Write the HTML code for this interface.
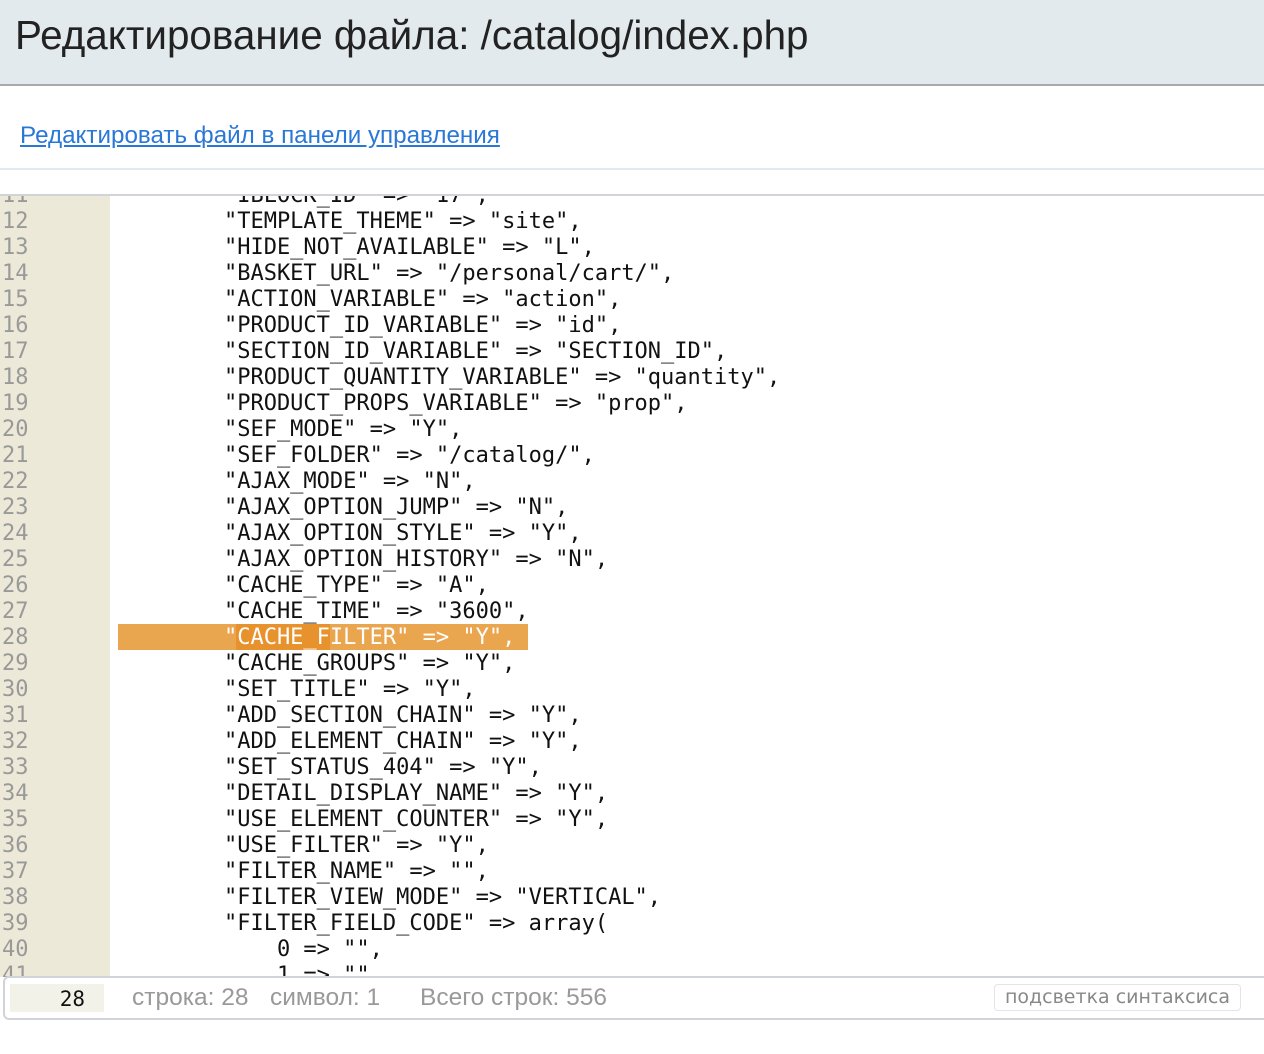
<!DOCTYPE html>
<html><head><meta charset="utf-8"><style>
*{margin:0;padding:0;box-sizing:border-box}
body{width:1264px;height:1054px;background:#fff;position:relative;overflow:hidden;font-family:"Liberation Sans",Arial,sans-serif}
.hdr{position:absolute;left:0;top:0;width:1264px;height:86px;background:#e2eaed;border-bottom:2px solid #a9a9a9}
.hdr h1{position:absolute;left:15px;top:12px;font-weight:normal;font-size:40.4px;color:#222;white-space:nowrap}
.lnk{position:absolute;left:20px;top:122px;font-size:24.2px;color:#2a78d6;text-decoration:underline;white-space:nowrap}
.sep1{position:absolute;left:0;top:168px;width:1264px;height:2px;background:#e1e8ee}
.ed{position:absolute;left:0;top:194px;width:1264px;height:783px;border-top:2px solid #d0d4d8;overflow:hidden}
.gut{position:absolute;left:0;top:0;width:110px;height:100%;background:#ece9d8}
.code{position:absolute;left:0;top:-13px;font-family:"DejaVu Sans Mono","Liberation Mono",monospace;font-size:22px;line-height:26px}
.l{height:26px;white-space:pre;position:relative}
.n{position:absolute;left:2px;color:#999;}
.t{position:absolute;left:118px;color:#111}
.hl{position:absolute;left:118px;top:-1px;width:410px;height:26px;background:#e9a64f}
.hl2{position:absolute;left:236px;top:-1px;width:94px;height:26px;background:#e8922e}
.sb{position:absolute;left:3px;top:976px;width:1270px;height:44px;border:2px solid #d0d4d8;border-right:none;border-radius:6px 0 0 6px}
.cur{position:absolute;left:10px;top:984px;width:94px;height:28px;background:#f3f2e8;font-family:"DejaVu Sans Mono",monospace;font-size:21px;color:#111;text-align:right;padding-right:19px;line-height:30px}
.st{position:absolute;top:984px;font-size:24.5px;color:#999;white-space:nowrap}
.btn{position:absolute;left:994px;top:984px;width:247px;height:27px;border:1px solid #e4e4e4;border-radius:4px;font-family:"DejaVu Sans",sans-serif;font-size:19px;color:#888;text-align:center;line-height:25px;white-space:nowrap}
</style></head><body>
<div class="hdr"><h1>Редактирование файла: /catalog/index.php</h1></div>
<div class="lnk">Редактировать файл в панели управления</div>
<div class="sep1"></div>
<div class="ed"><div class="gut"></div>
<div class="code">
<div class="l"><span class="n">11</span><span class="t">        "IBLOCK_ID" => "17",</span></div>
<div class="l"><span class="n">12</span><span class="t">        "TEMPLATE_THEME" => "site",</span></div>
<div class="l"><span class="n">13</span><span class="t">        "HIDE_NOT_AVAILABLE" => "L",</span></div>
<div class="l"><span class="n">14</span><span class="t">        "BASKET_URL" => "/personal/cart/",</span></div>
<div class="l"><span class="n">15</span><span class="t">        "ACTION_VARIABLE" => "action",</span></div>
<div class="l"><span class="n">16</span><span class="t">        "PRODUCT_ID_VARIABLE" => "id",</span></div>
<div class="l"><span class="n">17</span><span class="t">        "SECTION_ID_VARIABLE" => "SECTION_ID",</span></div>
<div class="l"><span class="n">18</span><span class="t">        "PRODUCT_QUANTITY_VARIABLE" => "quantity",</span></div>
<div class="l"><span class="n">19</span><span class="t">        "PRODUCT_PROPS_VARIABLE" => "prop",</span></div>
<div class="l"><span class="n">20</span><span class="t">        "SEF_MODE" => "Y",</span></div>
<div class="l"><span class="n">21</span><span class="t">        "SEF_FOLDER" => "/catalog/",</span></div>
<div class="l"><span class="n">22</span><span class="t">        "AJAX_MODE" => "N",</span></div>
<div class="l"><span class="n">23</span><span class="t">        "AJAX_OPTION_JUMP" => "N",</span></div>
<div class="l"><span class="n">24</span><span class="t">        "AJAX_OPTION_STYLE" => "Y",</span></div>
<div class="l"><span class="n">25</span><span class="t">        "AJAX_OPTION_HISTORY" => "N",</span></div>
<div class="l"><span class="n">26</span><span class="t">        "CACHE_TYPE" => "A",</span></div>
<div class="l"><span class="n">27</span><span class="t">        "CACHE_TIME" => "3600",</span></div>
<div class="l"><span class="n">28</span><div class="hl"></div><div class="hl2"></div><span class="t" style="color:#fff">        "CACHE_FILTER" => "Y",</span></div>
<div class="l"><span class="n">29</span><span class="t">        "CACHE_GROUPS" => "Y",</span></div>
<div class="l"><span class="n">30</span><span class="t">        "SET_TITLE" => "Y",</span></div>
<div class="l"><span class="n">31</span><span class="t">        "ADD_SECTION_CHAIN" => "Y",</span></div>
<div class="l"><span class="n">32</span><span class="t">        "ADD_ELEMENT_CHAIN" => "Y",</span></div>
<div class="l"><span class="n">33</span><span class="t">        "SET_STATUS_404" => "Y",</span></div>
<div class="l"><span class="n">34</span><span class="t">        "DETAIL_DISPLAY_NAME" => "Y",</span></div>
<div class="l"><span class="n">35</span><span class="t">        "USE_ELEMENT_COUNTER" => "Y",</span></div>
<div class="l"><span class="n">36</span><span class="t">        "USE_FILTER" => "Y",</span></div>
<div class="l"><span class="n">37</span><span class="t">        "FILTER_NAME" => "",</span></div>
<div class="l"><span class="n">38</span><span class="t">        "FILTER_VIEW_MODE" => "VERTICAL",</span></div>
<div class="l"><span class="n">39</span><span class="t">        "FILTER_FIELD_CODE" => array(</span></div>
<div class="l"><span class="n">40</span><span class="t">            0 => "",</span></div>
<div class="l"><span class="n">41</span><span class="t">            1 => "",</span></div>
</div></div>
<div class="sb"></div>
<div class="cur">28</div>
<div class="st" style="left:132px">строка: 28</div>
<div class="st" style="left:270px">символ: 1</div>
<div class="st" style="left:420px">Всего строк: 556</div>
<div class="btn">подсветка синтаксиса</div>
</body></html>
